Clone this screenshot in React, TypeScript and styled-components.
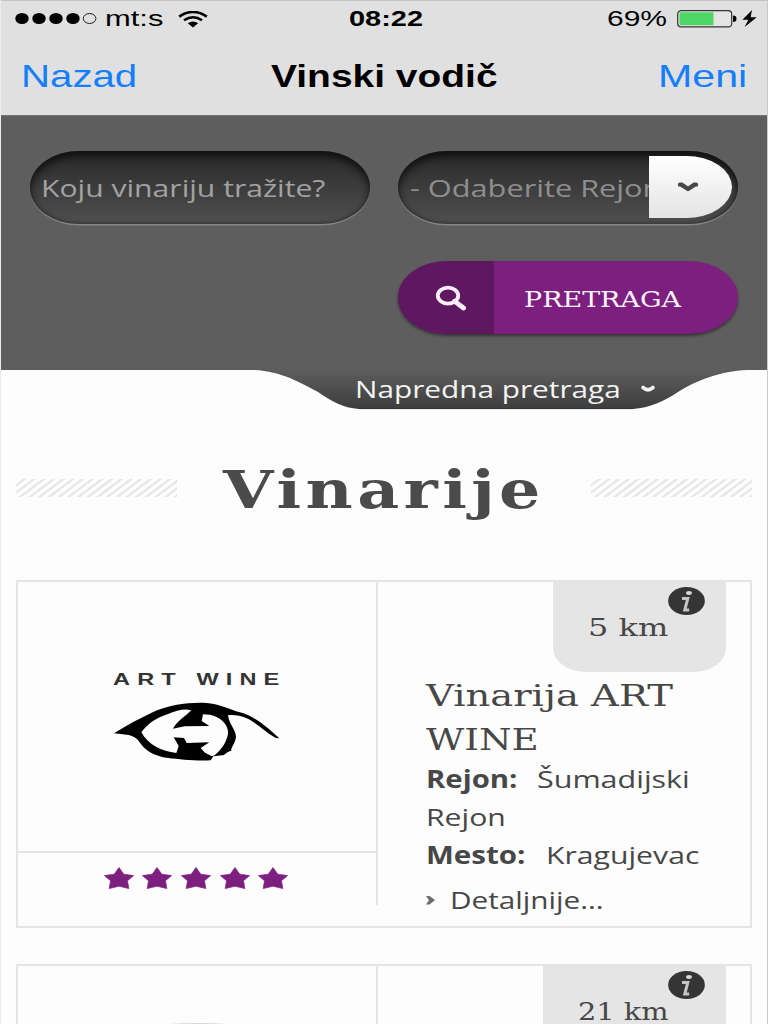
import React, { useLayoutEffect, useRef, useState } from "react";
import styled, { createGlobalStyle, css } from "styled-components";

const Global = createGlobalStyle`
  * { box-sizing: border-box; }
  html, body { margin: 0; padding: 0; background: #fdfdfd; }
  body { width: 768px; height: 1024px; overflow: hidden; }
`;

type Face = "ui" | "sans" | "serif";

const faces: Record<Face, string> = {
  ui: `"Liberation Sans", Arial, sans-serif`,
  sans: `"Open Sans", "Noto Sans", sans-serif`,
  serif: `"DejaVu Serif", serif`,
};

const WideBox = styled.span<{ $width: number; $line: number }>`
  display: block;
  flex: none;
  width: ${(p) => p.$width}px;
  height: ${(p) => p.$line}px;
  line-height: ${(p) => p.$line}px;
  text-align: left;
  white-space: nowrap;
`;

const WideInk = styled.span<{ $face: Face; $size: number; $weight: number; $spacing: number }>`
  display: inline-block;
  vertical-align: top;
  font-family: ${(p) => faces[p.$face]};
  font-size: ${(p) => p.$size}px;
  font-weight: ${(p) => p.$weight};
  letter-spacing: ${(p) => p.$spacing}px;
  transform-origin: 0 50%;
`;

interface WideProps {
  children: string;
  width: number;
  size: number;
  line: number;
  face?: Face;
  weight?: number;
  spacing?: number;
}

/* Extended lettering: the text is widened until it fills the given width. */
function Wide({ children, width, size, line, face = "sans", weight = 400, spacing = 0 }: WideProps) {
  const ref = useRef<HTMLSpanElement>(null);
  const [ratio, setRatio] = useState(1);
  useLayoutEffect(() => {
    if (ref.current) setRatio(width / ref.current.offsetWidth);
  }, [children, width, size]);
  return (
    <WideBox $width={width} $line={line}>
      <WideInk
        ref={ref}
        $face={face}
        $size={size}
        $weight={weight}
        $spacing={spacing}
        style={{ transform: `scaleX(${ratio})` }}
      >
        {children}
      </WideInk>
    </WideBox>
  );
}

const Screen = styled.div`
  width: 768px;
  height: 1024px;
  overflow: hidden;
  background: #fdfdfd;
  border-left: 1px solid #ebebeb;
  border-right: 1px solid #c9c9c9;
  display: flex;
  flex-direction: column;
`;

const Header = styled.header`
  flex: none;
  height: 116px;
  background: #e0e0e0;
  border-top: 1px solid #c4c4c4;
  border-bottom: 1px solid #747574;
  color: #000;
`;

const StatusBar = styled.div`
  display: grid;
  grid-template-columns: 1fr auto 1fr;
  align-items: center;
  height: 36px;
  padding: 0 10px 0 14px;
`;

const StatusGroup = styled.div<{ $end?: boolean }>`
  display: flex;
  align-items: center;
  ${(p) => p.$end && css`justify-content: flex-end;`}
`;

const Dots = styled.svg`
  margin-right: 8px;
`;

const Wifi = styled.svg`
  margin-left: 14px;
`;

const Battery = styled.svg`
  margin-left: 10px;
`;

const NavBar = styled.nav`
  display: grid;
  grid-template-columns: 1fr auto 1fr;
  align-items: center;
  height: 78px;
  padding: 0 20px 0 20px;
`;

const NavLink = styled.a<{ $end?: boolean }>`
  color: #157efb;
  justify-self: ${(p) => (p.$end ? "end" : "start")};
`;

const Search = styled.section`
  flex: none;
  height: 254px;
  background: #5e5e5e;
  padding: 35px 29px 0;
  display: grid;
  grid-template-columns: 340px 340px;
  grid-template-rows: 74px 73px;
  gap: 36px 28px;
  align-content: start;
`;

const Field = styled.div<{ $tone: string; $inset: number }>`
  display: flex;
  align-items: center;
  height: 73px;
  padding-left: ${(p) => p.$inset}px;
  border-radius: 49px / 36.5px;
  background: linear-gradient(#292929, #3a3a3a 45%, #505050);
  box-shadow: inset 0 7px 9px -2px #101010, inset 0 0 5px #262626, 0 1.5px 0 #858585;
  color: ${(p) => p.$tone};
`;

const SelectText = styled.div`
  flex: 1;
  overflow: hidden;
`;

const SelectButton = styled.span`
  flex: none;
  display: flex;
  align-items: center;
  justify-content: center;
  width: 83px;
  height: 62px;
  margin: 0 6px 1px 0;
  padding-right: 5px;
  border-radius: 0 46px 46px 0 / 0 31px 31px 0;
  background: linear-gradient(#ffffff, #e4e4e4);
`;

const SubmitButton = styled.button`
  grid-column: 2;
  display: flex;
  height: 73px;
  padding: 0;
  border: 0;
  overflow: hidden;
  border-radius: 49px / 36.5px;
  background: #7c1f7e;
  color: #fdf3fd;
  box-shadow: 0 2px 3px rgba(0, 0, 0, 0.45);
`;

const SubmitIcon = styled.span`
  display: flex;
  align-items: center;
  justify-content: center;
  width: 96px;
  height: 100%;
  padding-left: 9px;
  background: #5d185f;
`;

const SubmitLabel = styled.span`
  padding: 23px 0 0 30px;
`;

const Advanced = styled.div`
  flex: none;
  position: relative;
  height: 41px;
  margin-left: 252px;
  padding-left: 102px;
  width: 500px;
  display: flex;
  align-items: flex-start;
  color: #f4f4f4;
`;

const AdvancedShape = styled.svg`
  position: absolute;
  left: 0;
  top: -1px;
`;

const AdvancedLabel = styled.div`
  position: relative;
  display: flex;
  align-items: center;
  gap: 20px;
`;

const TitleRow = styled.div`
  flex: none;
  display: flex;
  align-items: center;
  justify-content: space-between;
  height: 80px;
  margin: 39px 15px 50px;
  color: #4b4b4b;
`;

const Hatch = styled.svg`
  display: block;
  margin-top: -4px;
`;

const Card = styled.article`
  flex: none;
  display: flex;
  width: 736px;
  height: 348px;
  margin: 0 0 36px 15px;
  border: 2px solid #e4e4e4;
  color: #474747;
`;

const Gallery = styled.div`
  width: 360px;
  height: 323px;
  border-right: 2px solid #e4e4e4;
`;

const Logo = styled.div`
  height: 271px;
  border-bottom: 2px solid #e4e4e4;
  padding: 86px 0 0 95px;
  color: #333;
`;

const LogoArt = styled.svg`
  display: block;
  margin: 8px 0 0 -1px;
`;

const Rating = styled.div`
  display: flex;
  gap: 8.7px;
  padding: 14px 0 0 85.5px;
`;

const Info = styled.div`
  flex: 1;
  display: flex;
  flex-direction: column;
  padding-left: 48px;
`;

const Distance = styled.div<{ $width: number }>`
  position: relative;
  align-self: flex-end;
  width: ${(p) => p.$width}px;
  height: 91px;
  margin: -1px 24px 2px 0;
  padding: 29px 0 0 35px;
  border-radius: 0 0 33px 33px / 0 0 24px 24px;
  background: #e5e5e5;
`;

const InfoBadge = styled.svg`
  position: absolute;
  right: 21px;
  top: 6px;
`;

const Facts = styled.div`
  margin-top: -2px;
`;

const Fact = styled.div`
  display: flex;
  gap: 20px;
`;

const Details = styled.a`
  display: flex;
  align-items: center;
  gap: 14px;
  margin-top: 7px;
`;

const PeekLogo = styled.svg`
  display: block;
  margin: 56px 0 0 137px;
`;

function Star() {
  return (
    <svg width="30" height="23" viewBox="0 0 30 23">
      <path
        d="M15 0.5 L19.8 7.2 L29.6 8.6 L23.5 13.8 L24.8 21.6 L15 19.2 L5.2 21.6 L6.5 13.8 L0.4 8.6 L10.2 7.2 Z"
        fill="#7c1f7e"
        stroke="#7c1f7e"
        strokeWidth="0.7"
      />
    </svg>
  );
}

function InfoMark() {
  return (
    <InfoBadge width="37" height="28" viewBox="0 0 37 28">
      <ellipse cx="18.5" cy="14" rx="18.3" ry="14" fill="#353536" />
      <ellipse cx="21" cy="6" rx="2.9" ry="1.9" fill="#d9d9d9" />
      <path d="M14 11.4 H19.8 L16.8 23 H21.2" fill="none" stroke="#c4c4c4" strokeWidth="3" />
    </InfoBadge>
  );
}

function HatchStrip() {
  const lines = Array.from({ length: 20 }, (_, i) => i * 9.7 - 15.4);
  return (
    <Hatch width="161" height="18" viewBox="0 0 161 18">
      {lines.map((x) => (
        <path key={x} d={`M${x - 1.3} 19 L${x + 25.3} -1`} stroke="#e5e5e5" strokeWidth="2.1" />
      ))}
    </Hatch>
  );
}

export default function App() {
  return (
    <>
      <Global />
      <Screen>
        <Header>
          <StatusBar>
            <StatusGroup>
              <Dots width="82" height="14" viewBox="0 0 82 14">
                {[7, 24, 41, 58].map((x) => (
                  <ellipse key={x} cx={x} cy="6.5" rx="6.7" ry="5.6" />
                ))}
                <ellipse cx="74.6" cy="6.5" rx="6.3" ry="5" fill="none" stroke="#222" />
              </Dots>
              <Wide face="ui" width={59} size={22} line={34}>mt:s</Wide>
              <Wifi width="30" height="17" viewBox="0 0 30 17">
                <path d="M1.2 5.6 Q15 -3.6 28.8 5.6" fill="none" stroke="#000" strokeWidth="2.7" />
                <path d="M6 9.3 Q15 3.2 24 9.3" fill="none" stroke="#000" strokeWidth="2.5" />
                <path d="M9.8 12.3 Q15 8.6 20.2 12.3 L15 16.5 Z" />
              </Wifi>
            </StatusGroup>
            <Wide face="ui" width={74} size={21.5} line={34} weight={700}>08:22</Wide>
            <StatusGroup $end>
              <Wide face="ui" width={60} size={21.5} line={34}>69%</Wide>
              <Battery width="80" height="20" viewBox="0 0 80 20">
                <rect x="0.7" y="1.6" width="54" height="16.3" rx="3.5" fill="#e4e4e4" stroke="#333" strokeWidth="1.2" />
                <rect x="2.5" y="3.3" width="34" height="13" rx="1" fill="#4cd663" />
                <path d="M56 6.6 Q59.5 6.6 59.5 9.8 Q59.5 13 56 13 Z" />
                <path d="M75 1 L65.4 10.8 H71.4 L67.6 18 L79.8 8.2 H73.6 Z" />
              </Battery>
            </StatusGroup>
          </StatusBar>
          <NavBar>
            <NavLink><Wide face="ui" width={116} size={30.5} line={50}>Nazad</Wide></NavLink>
            <Wide face="ui" width={226} size={30.5} line={50} weight={700}>Vinski vodič</Wide>
            <NavLink $end><Wide face="ui" width={89} size={30.5} line={50}>Meni</Wide></NavLink>
          </NavBar>
        </Header>

        <Search>
          <Field $tone="#a2a2a2" $inset={11}>
            <Wide width={284} size={24.5} line={38}>Koju vinariju tražite?</Wide>
          </Field>
          <Field $tone="#8e8e8e" $inset={12}>
            <SelectText>
              <Wide width={252} size={24.5} line={38}>- Odaberite Rejon</Wide>
            </SelectText>
            <SelectButton>
              <svg width="24" height="12" viewBox="0 0 24 12">
                <path d="M4 3.6 L5.5 3.6 L12 8 L18.5 3.6 L20 3.6" fill="none" stroke="#484848" strokeWidth="4.4" strokeLinecap="round" strokeLinejoin="round" />
              </svg>
            </SelectButton>
          </Field>
          <SubmitButton>
            <SubmitIcon>
              <svg width="32" height="26" viewBox="0 0 32 26">
                <ellipse cx="13" cy="10.6" rx="10.2" ry="8" fill="none" stroke="#fbeefb" strokeWidth="3.8" />
                <path d="M19.5 16.2 L28.5 23" stroke="#fbeefb" strokeWidth="4.8" strokeLinecap="round" />
              </svg>
            </SubmitIcon>
            <SubmitLabel>
              <Wide face="serif" width={157} size={22.5} line={30}>PRETRAGA</Wide>
            </SubmitLabel>
          </SubmitButton>
        </Search>

        <Advanced>
          <AdvancedShape width="500" height="42" viewBox="0 0 500 42">
            <defs>
              <linearGradient id="tab" x1="0" y1="0" x2="0" y2="1">
                <stop offset="0" stopColor="#5e5e5e" />
                <stop offset="1" stopColor="#3d3d3d" />
              </linearGradient>
            </defs>
            <path
              d="M0 0 V1 C28 2 48 14 65 23 C78 32 90 39 106 40 H380 C396 39 412 32 425 23 C442 12 468 2 494 1 V0 Z"
              fill="url(#tab)"
            />
            <path d="M106 39.6 H380" stroke="#2e2e2e" strokeWidth="0.8" />
          </AdvancedShape>
          <AdvancedLabel>
            <Wide width={266} size={24.5} line={38}>Napredna pretraga</Wide>
            <svg width="14" height="8" viewBox="0 0 14 8">
              <path d="M2.2 2.6 Q7 6.8 11.8 2.6" fill="none" stroke="#f2f2f2" strokeWidth="3.8" strokeLinecap="round" />
            </svg>
          </AdvancedLabel>
        </Advanced>

        <TitleRow>
          <HatchStrip />
          <Wide face="serif" width={322} size={52} line={80} weight={700} spacing={3.5}>Vinarije</Wide>
          <HatchStrip />
        </TitleRow>

        <Card>
          <Gallery>
            <Logo>
              <Wide face="ui" width={174} size={16.5} line={22} weight={700} spacing={5}>ART WINE</Wide>
              <LogoArt width="170" height="66.67" viewBox="66 144 510 200">
                <path
                  fillRule="evenodd"
                  d="M72 250 C110 225 150 205 185 188 C230 165 290 157 340 158 C385 160 420 178 450 187 C500 200 540 240 568 265 L558 264 C530 250 500 218 470 205 C450 196 430 194 414 196 C418 225 438 240 438 262 C434 285 422 292 424 302 C410 304 406 316 396 316 L378 318 L370 319 L362 331 C320 334 270 328 235 324 C190 318 165 300 150 278 C140 262 125 256 110 254 Z
                  M154 247 C172 222 200 203 232 193 C262 180 285 175 304 181 C285 200 262 212 249 236 L284 229 L358 228 L335 213 L339 193 L360 194 C392 200 417 225 414 252 C408 282 392 300 374 316 L366 319 L345 308 L332 294 L358 277 L290 279 L282 264 L251 262 L266 288 L259 309 C215 304 175 285 154 247Z"
                />
              </LogoArt>
            </Logo>
            <Rating>
              {[0, 1, 2, 3, 4].map((n) => <Star key={n} />)}
            </Rating>
          </Gallery>
          <Info>
            <Distance $width={173}>
              <Wide face="serif" width={80} size={24} line={36}>5 km</Wide>
              <InfoMark />
            </Distance>
            <Wide face="serif" width={247} size={29} line={44}>Vinarija ART</Wide>
            <Wide face="serif" width={113} size={29} line={44}>WINE</Wide>
            <Facts>
              <Fact>
                <Wide width={91} size={24.5} line={38} weight={700}>Rejon:</Wide>
                <Wide width={153} size={24.5} line={38}>Šumadijski</Wide>
              </Fact>
              <Wide width={80} size={24.5} line={38}>Rejon</Wide>
              <Fact>
                <Wide width={100} size={24.5} line={38} weight={700}>Mesto:</Wide>
                <Wide width={154} size={24.5} line={38}>Kragujevac</Wide>
              </Fact>
              <Details>
                <svg width="10" height="11" viewBox="0 0 10 11">
                  <path d="M0 1 H3.5 L9 5 L3.5 9.4 H0 L3 5.2 Z" fill="#6b6b6b" />
                </svg>
                <Wide width={154} size={24.5} line={38}>Detaljnije...</Wide>
              </Details>
            </Facts>
          </Info>
        </Card>

        <Card>
          <Gallery>
            <PeekLogo width="88" height="6" viewBox="0 0 88 6">
              <path d="M2 3 Q44 -1 86 3 Z" fill="#d6d6d6" />
            </PeekLogo>
          </Gallery>
          <Info>
            <Distance $width={183}>
              <Wide face="serif" width={90} size={24} line={36}>21 km</Wide>
              <InfoMark />
            </Distance>
          </Info>
        </Card>
      </Screen>
    </>
  );
}
